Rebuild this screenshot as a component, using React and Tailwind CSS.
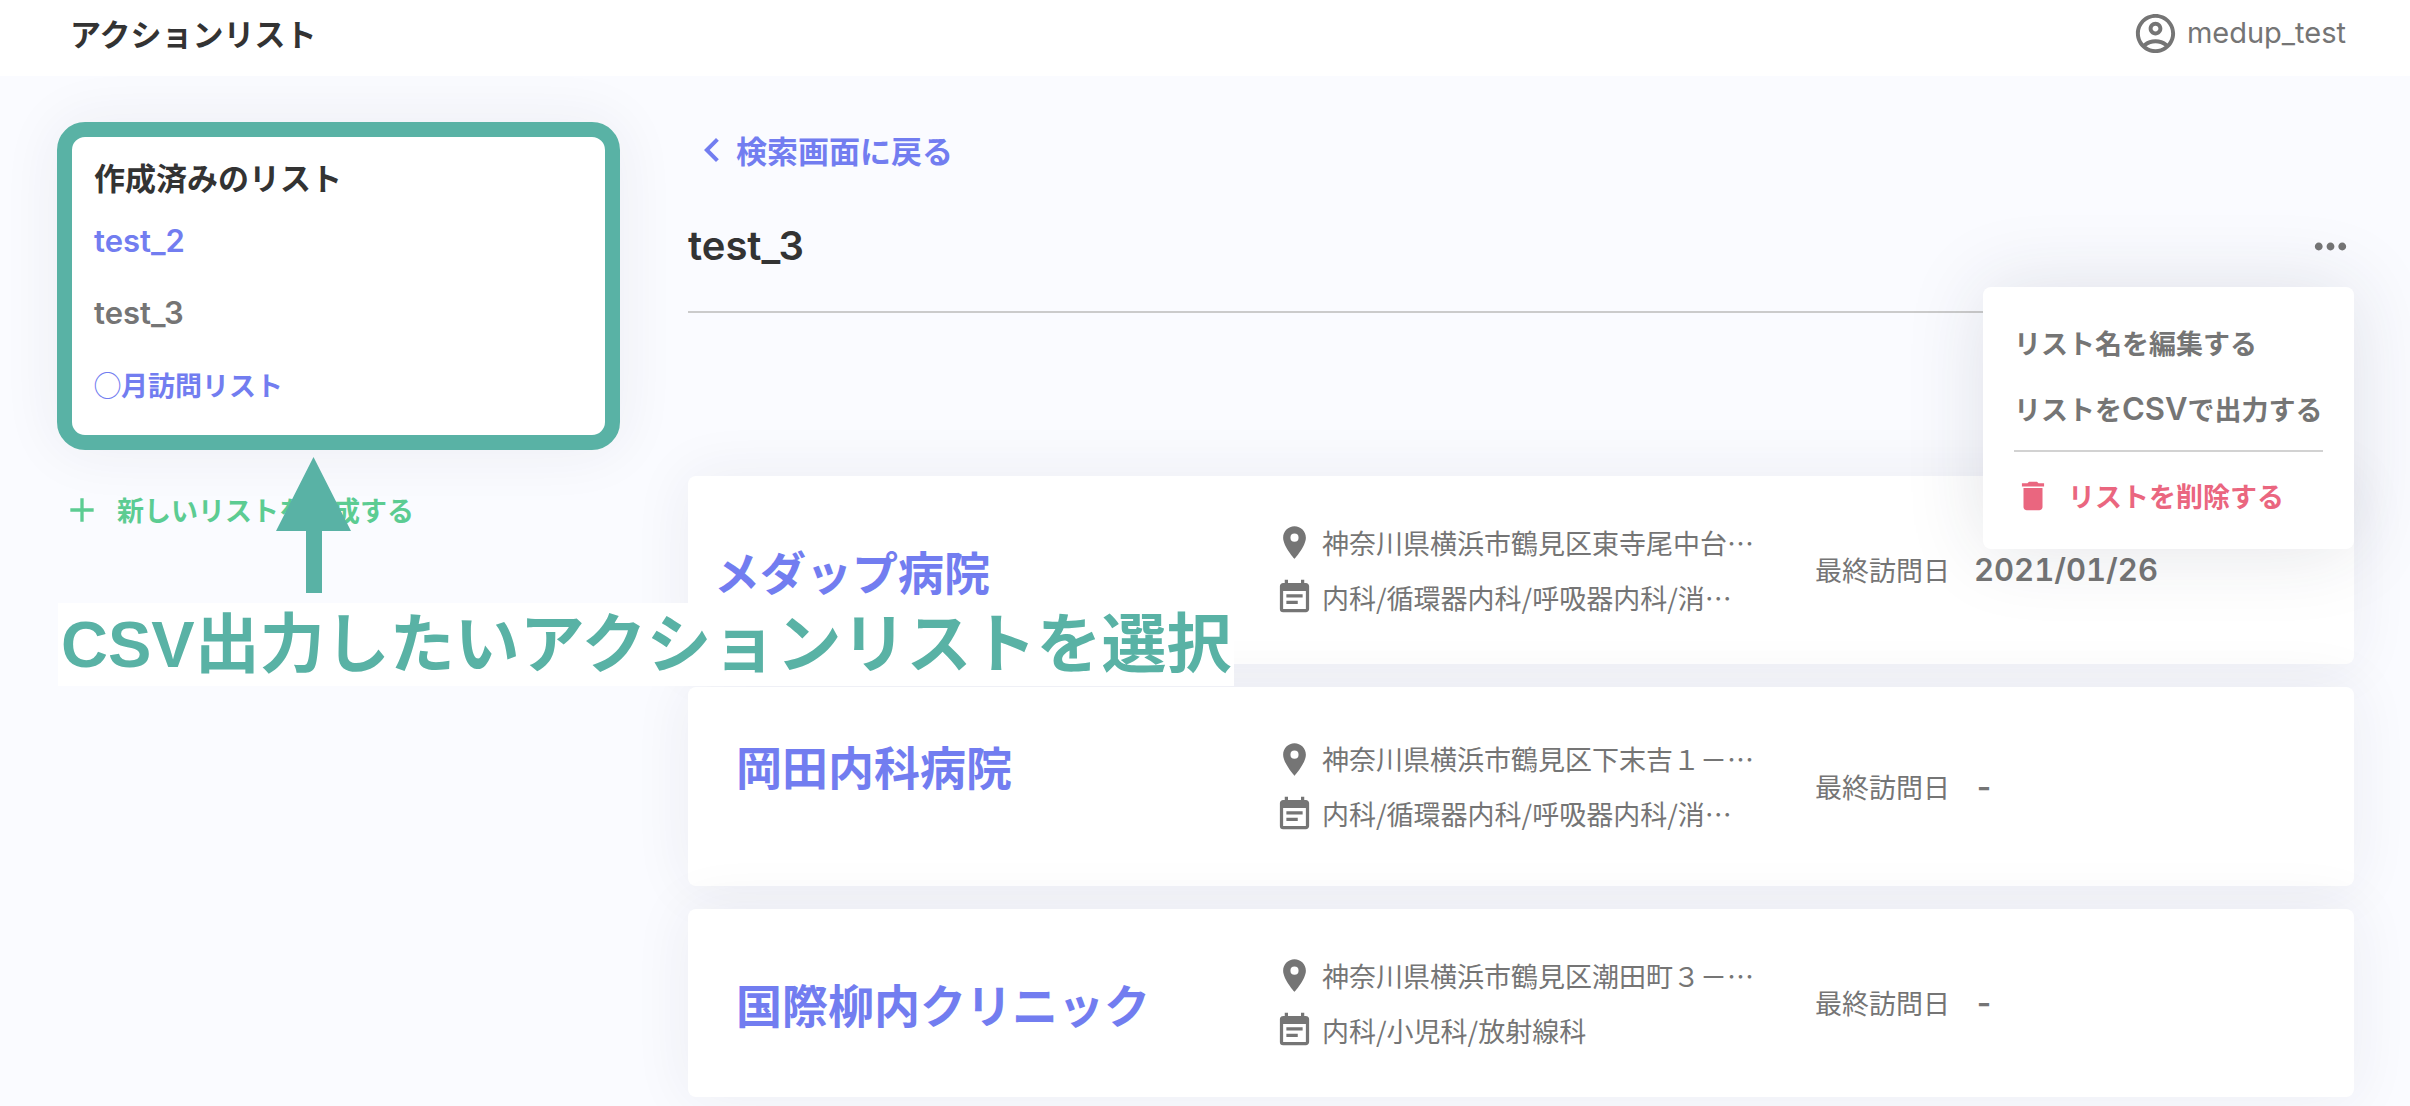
import {
  MdAdd,
  MdChevronLeft,
  MdDelete,
  MdEventNote,
  MdLocationOn,
  MdMoreHoriz,
  MdOutlineAccountCircle,
} from "react-icons/md";

const lists = [
  { name: "test_2", className: "font-['Inter'] text-[31px] font-semibold text-[#727df0]" },
  { name: "test_3", className: "font-['Inter'] text-[31px] font-semibold text-[#757575]" },
  { name: "◯月訪問リスト", className: "text-[27px] font-bold text-[#727df0]" },
];

const hospitals = [
  {
    name: "メダップ病院",
    nameClass: "pl-[26px]",
    cardClass: "h-[188px]",
    address: "神奈川県横浜市鶴見区東寺尾中台…",
    departments: "内科/循環器内科/呼吸器内科/消…",
    lastVisit: "2021/01/26",
  },
  {
    name: "岡田内科病院",
    nameClass: "pl-12 pb-11",
    cardClass: "h-[199px]",
    address: "神奈川県横浜市鶴見区下末吉１－…",
    departments: "内科/循環器内科/呼吸器内科/消…",
    lastVisit: "-",
  },
  {
    name: "国際柳内クリニック",
    nameClass: "pl-12",
    cardClass: "h-[188px]",
    address: "神奈川県横浜市鶴見区潮田町３－…",
    departments: "内科/小児科/放射線科",
    lastVisit: "-",
  },
];

function Header() {
  return (
    <header className="flex h-[76px] items-center justify-between bg-white pr-16 pb-2.5 pl-[70px]">
      <h1 className="text-[31px] leading-10 font-bold text-[#333]">アクションリスト</h1>
      <button type="button" className="flex items-center gap-2 text-[#757575]">
        <MdOutlineAccountCircle className="size-[47px]" />
        <span className="font-['Inter'] text-[29px] leading-10">medup_test</span>
      </button>
    </header>
  );
}

function Sidebar() {
  return (
    <aside className="relative w-[563px] shrink-0 pt-[46px]">
      <nav className="rounded-[28px] border-[15px] border-[#59b2a5] bg-white px-[22px] pt-5 pb-[30px] shadow-[0_0_60px_rgba(40,44,70,0.07)]">
        <h2 className="text-[31px] leading-10 font-bold text-[#333]">作成済みのリスト</h2>
        <ul className="mt-6 flex flex-col gap-8">
          {lists.map((l) => (
            <li key={l.name} className="leading-10">
              <a href="#" className={`block leading-10 ${l.className}`}>
                {l.name}
              </a>
            </li>
          ))}
        </ul>
      </nav>
      <button type="button" className="mt-10 ml-[5px] flex items-center gap-[15px] text-[#5ccc92]">
        <MdAdd className="size-10" />
        <span className="text-[27px] leading-10 font-bold">新しいリストを作成する</span>
      </button>

      {/* Callout */}
      <svg
        className="absolute top-[381px] left-[219px] h-[137px] w-[76px] fill-[#59b2a5]"
        viewBox="0 0 76 137"
        aria-hidden="true"
      >
        <path d="M37.500 0 75 74H46V136H30V74H0Z" />
      </svg>
      <p className="absolute top-[527px] left-px z-10 bg-white px-[3px] font-['Liberation_Sans','Noto_Sans_CJK_JP',sans-serif] text-[65px] leading-[83px] font-bold whitespace-nowrap text-[#59b2a5]">
        CSV出力したいアクションリストを選択
      </p>
    </aside>
  );
}

function ListMenu() {
  return (
    <div className="absolute top-[65px] right-0 z-20 w-[371px] rounded-lg bg-white px-[31px] pt-9 pb-[33px] text-[27px] leading-10 font-bold whitespace-nowrap text-[#757575] shadow-[0_0_80px_rgba(40,44,70,0.13)]">
      <div className="flex flex-col items-start gap-[26px]">
        <button type="button">リスト名を編集する</button>
        <button type="button">
          リストを<span className="font-['Inter'] text-[31px] leading-none font-semibold">CSV</span>で出力する
        </button>
      </div>
      <hr className="mt-[21px] border-t-2 border-[#d2d2d2]" />
      <button type="button" className="mt-6 flex items-center gap-4 text-[#ea667f]">
        <MdDelete className="size-[38px]" />
        リストを削除する
      </button>
    </div>
  );
}

function HospitalCard({ hospital }) {
  return (
    <li
      className={`grid grid-cols-[587fr_540fr_539fr] items-center rounded-lg bg-white text-[27px] leading-10 text-[#757575] shadow-[0_0_60px_rgba(40,44,70,0.07)] ${hospital.cardClass}`}
    >
      <h3 className={`text-[46px] leading-[60px] font-bold whitespace-nowrap ${hospital.nameClass}`}>
        <a href="#" className="text-[#727df0]">
          {hospital.name}
        </a>
      </h3>
      <div className="flex flex-col gap-[15px] whitespace-nowrap">
        <div className="flex items-center gap-2">
          <MdLocationOn className="size-[39px] shrink-0" />
          <span>{hospital.address}</span>
        </div>
        <div className="flex items-center gap-2">
          <MdEventNote className="size-[39px] shrink-0" />
          <span>{hospital.departments}</span>
        </div>
      </div>
      <dl className="flex items-center gap-6 whitespace-nowrap">
        <dt>最終訪問日</dt>
        <dd className="font-['Inter'] text-[31px] font-semibold tabular-nums">{hospital.lastVisit}</dd>
      </dl>
    </li>
  );
}

export default function App() {
  return (
    <div className="h-screen overflow-hidden bg-[#fafbff] font-['Noto_Sans_CJK_JP',sans-serif]" lang="ja">
      <Header />
      <div className="flex gap-[68px] pr-14 pl-[57px]">
        <Sidebar />
        <main className="min-w-0 flex-1 pt-[50px]">
          <a href="#" className="flex items-center text-[#727df0]">
            <MdChevronLeft className="size-12" />
            <span className="text-[31px] leading-[48px] font-bold">検索画面に戻る</span>
          </a>

          <div className="relative mt-12 flex items-center justify-between border-b-2 border-[#cbcbcb] pb-[41px]">
            <h2 className="font-['Inter'] text-[40px] leading-[48px] font-semibold text-[#333]">test_3</h2>
            <button type="button" aria-label="メニュー" className="text-[#757575]">
              <MdMoreHoriz className="size-[47px]" />
            </button>
            <ListMenu />
          </div>

          <ul className="mt-[163px] flex flex-col gap-[23px]">
            {hospitals.map((h) => (
              <HospitalCard key={h.name} hospital={h} />
            ))}
          </ul>
        </main>
      </div>
    </div>
  );
}
